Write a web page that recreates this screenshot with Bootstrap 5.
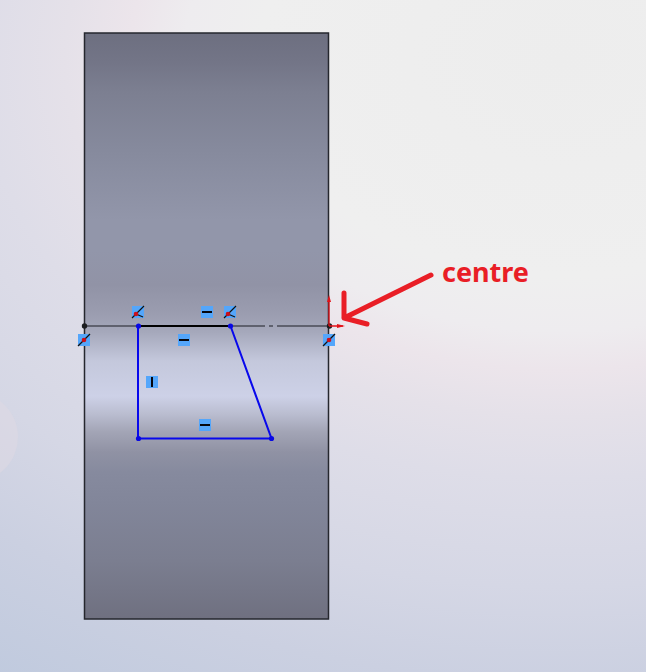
<!DOCTYPE html>
<html lang="en">
<head>
<meta charset="utf-8">
<meta name="viewport" content="width=device-width, initial-scale=1">
<title>Sketch view</title>
<link href="https://cdn.jsdelivr.net/npm/bootstrap@5.3.0/dist/css/bootstrap.min.css" rel="stylesheet">
<style>
  body { background: #c9cee0; }
  .note { font: 700 27px "Noto Sans", "Open Sans", sans-serif; fill: #e91e26; }
  .sketch { stroke: #0808ec; stroke-width: 2; fill: none; }
  .vertex { fill: #0808e4; }
  .tile { fill: #54a6fb; }
</style>
<script src="https://cdn.jsdelivr.net/npm/bootstrap@5.3.0/dist/js/bootstrap.bundle.min.js"></script>
</head>
<body>
<main class="container-fluid p-0 overflow-hidden">
<svg class="d-block w-100 h-auto" viewBox="0 0 646 672" role="img" aria-label="Sketch on a cylinder, with its centre marked">
  <defs>
    <radialGradient id="backdrop" gradientUnits="userSpaceOnUse" cx="0" cy="0" r="1" gradientTransform="translate(560 60) scale(1075 775)">
      <stop offset="0" stop-color="#ededed"/>
      <stop offset=".28" stop-color="#efefef"/>
      <stop offset=".35" stop-color="#eeecef"/>
      <stop offset=".4" stop-color="#ece5eb"/>
      <stop offset=".46" stop-color="#e5e1e9"/>
      <stop offset=".54" stop-color="#dedde8"/>
      <stop offset=".68" stop-color="#d5d7e5"/>
      <stop offset=".8" stop-color="#cbd0e1"/>
      <stop offset=".95" stop-color="#c0cade"/>
    </radialGradient>
    <linearGradient id="steel" gradientUnits="userSpaceOnUse" x1="0" y1="33" x2="0" y2="619">
      <stop offset="0" stop-color="#6d6f80"/>
      <stop offset=".05" stop-color="#737587"/>
      <stop offset=".1" stop-color="#7c7f91"/>
      <stop offset=".2" stop-color="#868a9d"/>
      <stop offset=".32" stop-color="#9296aa"/>
      <stop offset=".37" stop-color="#9296aa"/>
      <stop offset=".43" stop-color="#9193a6"/>
      <stop offset=".48" stop-color="#9b9db0"/>
      <stop offset=".51" stop-color="#a5a8bb"/>
      <stop offset=".56" stop-color="#c4c8dc"/>
      <stop offset=".62" stop-color="#cdd1e7"/>
      <stop offset=".65" stop-color="#babdd0"/>
      <stop offset=".68" stop-color="#a3a5b6"/>
      <stop offset=".715" stop-color="#9092a4"/>
      <stop offset=".75" stop-color="#868a9e"/>
      <stop offset=".8" stop-color="#82869a"/>
      <stop offset=".9" stop-color="#7b7e90"/>
      <stop offset="1" stop-color="#6f7080"/>
    </linearGradient>
    <g id="horizontal">
      <rect class="tile" width="12" height="12"/>
      <path d="M1 6H11" stroke="#05070f" stroke-width="2"/>
    </g>
    <g id="coincident">
      <rect class="tile" width="12" height="12"/>
      <path d="M0 12L12 0" stroke="#111" stroke-width="1.3"/>
      <circle cx="6" cy="6" r="2.3" fill="#c9101c"/>
    </g>
    <g id="endpoint">
      <rect class="tile" width="12" height="12"/>
      <path d="M0 12L12 0M4 8L11 11" stroke="#111" stroke-width="1.2"/>
      <circle cx="4" cy="8" r="2.3" fill="#c9101c"/>
    </g>
  </defs>

  <rect width="646" height="672" fill="url(#backdrop)"/>
  <circle cx="-27" cy="437" r="45" fill="#e0dae3" opacity=".5"/>

  <!-- cylinder body -->
  <rect x="84.5" y="33" width="244" height="586" fill="url(#steel)" stroke="#25272e" stroke-width="1.5"/>

  <!-- centre line -->
  <path d="M84 326H265M269 326H273M277 326H329" stroke="#494b57" stroke-width="1.7"/>
  <path d="M138 326H230" stroke="#000" stroke-width="2"/>
  <circle cx="84.5" cy="326" r="2.7" fill="#1b1d20"/>

  <!-- origin -->
  <circle cx="329.5" cy="326" r="2.7" fill="#1b1d20"/>
  <path d="M329 326V298M329 326H343" stroke="#e31219" stroke-width="1.3"/>
  <path d="M329 295L331 302H327ZM345 326L337 324V328Z" fill="#e31219"/>

  <!-- sketch profile -->
  <path class="sketch" d="M138 326V438.5H271.5L230.5 326"/>
  <g class="vertex">
    <circle cx="138.500" cy="326" r="2.6"/>
    <circle cx="230.500" cy="326" r="2.6"/>
    <circle cx="138.500" cy="438.5" r="2.6"/>
    <circle cx="271.500" cy="438.5" r="2.6"/>
  </g>

  <!-- relation markers -->
  <use href="#endpoint" x="132" y="306"/>
  <use href="#endpoint" x="224" y="306"/>
  <use href="#horizontal" x="201" y="306"/>
  <use href="#horizontal" x="178" y="334"/>
  <use href="#horizontal" x="199" y="419"/>
  <use href="#horizontal" transform="translate(158 376) rotate(90)"/>
  <use href="#coincident" x="78" y="334"/>
  <use href="#coincident" x="323" y="334"/>

  <!-- callout -->
  <path d="M431 275L344 318M344 293V318L367 324" fill="none" stroke="#e91e26" stroke-width="5" stroke-linecap="round" stroke-linejoin="round"/>
  <text class="note" x="442" y="282">centre</text>
</svg>
</main>
</body>
</html>
